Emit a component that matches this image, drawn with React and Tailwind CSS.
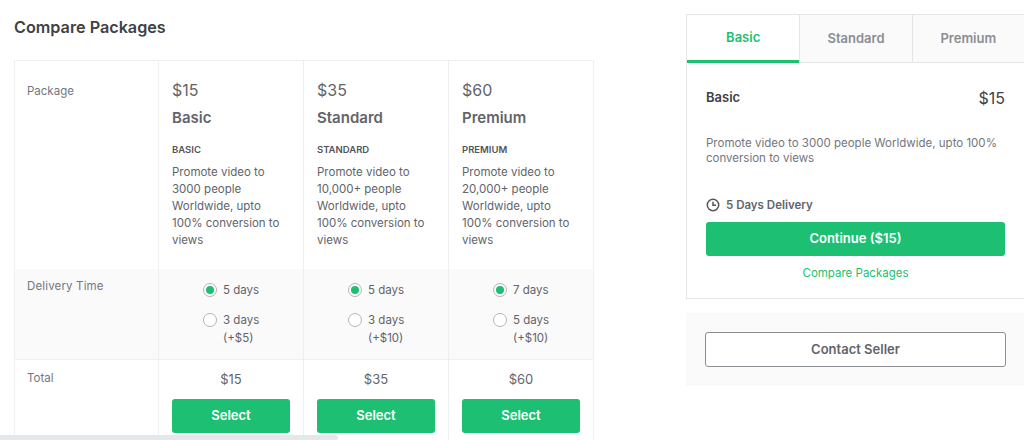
import { useState } from 'react';

const packages = [
    {
        price: '$15',
        name: 'Basic',
        desc: 'Promote video to 3000 people Worldwide, upto 100% conversion to views',
        days: '5 days',
        altDays: '3 days',
        extra: '(+$5)',
    },
    {
        price: '$35',
        name: 'Standard',
        desc: 'Promote video to 10,000+ people Worldwide, upto 100% conversion to views',
        days: '5 days',
        altDays: '3 days',
        extra: '(+$10)',
    },
    {
        price: '$60',
        name: 'Premium',
        desc: 'Promote video to 20,000+ people Worldwide, upto 100% conversion to views',
        days: '7 days',
        altDays: '5 days',
        extra: '(+$10)',
    },
];

const Radio = ({ checked }) => (
    <span className="flex h-[14px] w-[14px] shrink-0 items-center justify-center rounded-full border border-[#b5b5b5] bg-white">
        {checked && <span className="h-2 w-2 rounded-full bg-[#1dbf73]" />}
    </span>
);

const ClockIcon = () => (
    <svg width="14" height="14" viewBox="0 0 14 14" fill="none" stroke="#555" strokeWidth="1.5">
        <circle cx="7" cy="7" r="5.7" />
        <path d="M7 3.8V7.3H10" />
    </svg>
);

const App = () => {
    const [tab] = useState('Basic');

    return (
        <div className="relative flex h-[440px] w-[1024px] overflow-hidden bg-white font-['Inter',sans-serif] text-[#62646a]">
            {/* Compare table */}
            <div className="w-[686px] shrink-0 pl-[14px]">
                <h2 className="mt-[16px] text-[16.2px] leading-[22px] font-semibold text-[#404145]">Compare Packages</h2>

                <div className="mt-[22px] w-[580px] border-t border-l border-[#efeff0]">
                    <div className="grid h-[208px] grid-cols-[144px_145px_145px_145px]">
                        <div className="border-r border-[#efeff0] pt-[22px] pl-[12px] text-[11.5px] leading-[16px] text-[#74767e]">Package</div>
                        {packages.map((p) => (
                            <div key={p.name} className="border-r border-[#efeff0] px-[13px] pt-[18px]">
                                <p className="text-[16px] leading-[22px] text-[#62646a]">{p.price}</p>
                                <p className="mt-[6px] text-[15px] leading-[22px] font-semibold text-[#62646a]">{p.name}</p>
                                <p className="mt-[14px] text-[9.5px] leading-[14px] font-semibold text-[#52545a] uppercase">{p.name}</p>
                                <p className="mt-[7px] text-[11.5px] leading-[17px] text-[#62646a]">{p.desc}</p>
                            </div>
                        ))}
                    </div>

                    <div className="grid h-[91px] grid-cols-[144px_145px_145px_145px] border-b border-[#efeff0] bg-[#fafafa]">
                        <div className="border-r border-[#efeff0] pt-[9px] pl-[12px] text-[11.5px] leading-[16px] tracking-[0.15px] text-[#74767e]">Delivery Time</div>
                        {packages.map((p) => (
                            <div key={p.name} className="flex flex-col items-center border-r border-[#efeff0] pt-[12px] text-[11.5px] leading-[18px]">
                                <div className="flex w-[56px] items-center gap-[6px]">
                                    <Radio checked />
                                    <span className="whitespace-nowrap">{p.days}</span>
                                </div>
                                <div className="mt-[12px] flex w-[56px] items-start gap-[6px]">
                                    <span className="pt-[2px]"><Radio /></span>
                                    <span className="whitespace-nowrap">{p.altDays}<br />{p.extra}</span>
                                </div>
                            </div>
                        ))}
                    </div>

                    <div className="grid h-[90px] grid-cols-[144px_145px_145px_145px]">
                        <div className="border-r border-[#efeff0] pt-[10px] pl-[12px] text-[11.5px] leading-[16px] text-[#74767e]">Total</div>
                        {packages.map((p) => (
                            <div key={p.name} className="border-r border-[#efeff0] px-[13px] pt-[10px] text-center">
                                <p className="text-[13px] leading-[18px]">{p.price}</p>
                                <button className="mt-[11px] h-[34px] w-[118px] rounded-[3px] bg-[#1dbf73] text-[13px] font-semibold text-white">Select</button>
                            </div>
                        ))}
                    </div>
                </div>
            </div>

            {/* Sidebar */}
            <div className="w-[338px] shrink-0 pt-[14px]">
                <div className="h-[285px] border border-[#e4e5e7] border-r-0">
                    <div className="flex h-[48px]">
                        {packages.map((p) => (
                            <div
                                key={p.name}
                                className={p.name === tab
                                    ? 'flex w-[113px] items-center justify-center border-b-[3px] border-[#1dbf73] bg-white pt-[1px] text-[13px] font-semibold text-[#1dbf73]'
                                    : 'flex w-[113px] items-center justify-center border-b border-l border-[#e4e5e7] bg-[#fafafa] text-[13px] font-semibold text-[#8b8d93]'}
                            >
                                {p.name}
                            </div>
                        ))}
                    </div>
                    <div className="w-[318px] pt-[25px] pl-[19px]">
                        <div className="flex h-[20px] items-center justify-between">
                            <span className="text-[13px] font-semibold text-[#404145]">Basic</span>
                            <span className="text-[16px] text-[#404145]">$15</span>
                        </div>
                        <p className="mt-[28px] text-[11.5px] leading-[15px] text-[#74767e]">Promote video to 3000 people Worldwide, upto 100% conversion to views</p>
                        <div className="mt-[31px] flex items-center gap-[6px] text-[11.5px] leading-[16px] font-semibold text-[#62646a]">
                            <ClockIcon />
                            5 Days Delivery
                        </div>
                        <button className="mt-[9px] h-[34px] w-[299px] rounded-[3px] bg-[#1dbf73] text-[13px] font-semibold text-white">Continue ($15)</button>
                        <p className="mt-[9px] w-[299px] text-center text-[11.5px] leading-[16px] text-[#1dbf73]">Compare Packages</p>
                    </div>
                </div>

                <div className="mt-[14px] h-[73px] bg-[#fafafa] pt-[19px] pl-[19px]">
                    <button className="h-[35px] w-[301px] rounded-[3px] border border-[#8d8e93] bg-white text-[13px] font-semibold text-[#62646a]">Contact Seller</button>
                </div>
            </div>

            {/* Scrollbar */}
            <div className="absolute bottom-0 left-0 h-[5px] w-[338px] rounded-r bg-[#e5e7eb]" />
        </div>
    );
};

export default App;
